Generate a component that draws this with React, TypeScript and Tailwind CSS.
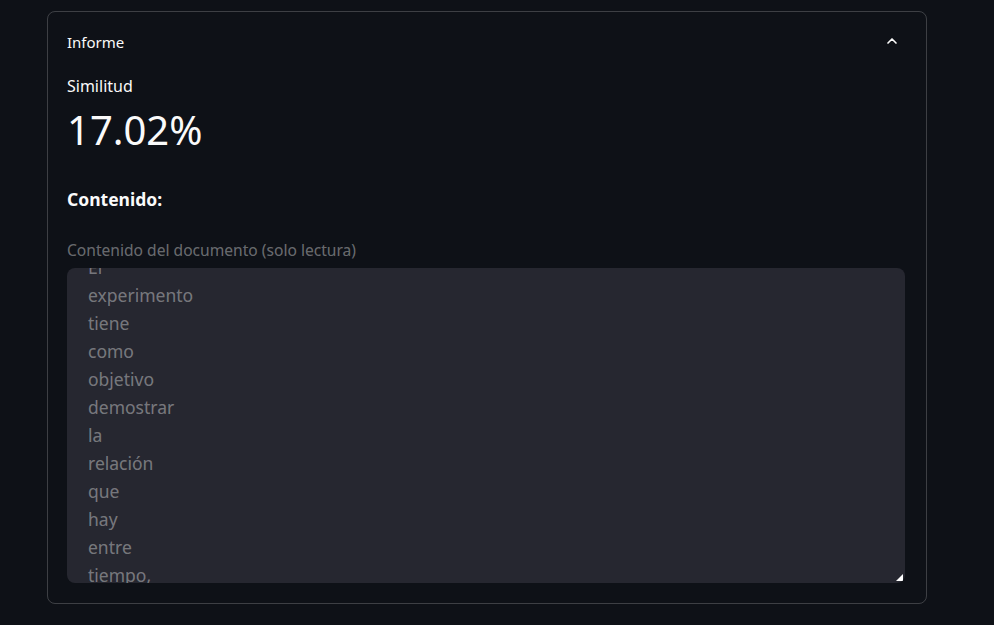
import { ChevronUp } from 'lucide-react'

const palabras = [
  'El',
  'experimento',
  'tiene',
  'como',
  'objetivo',
  'demostrar',
  'la',
  'relación',
  'que',
  'hay',
  'entre',
  'tiempo,',
]

export default function App() {
  return (
    <div className="min-h-[625px] w-full bg-[#0e1117] text-[#fafafa] font-['Noto_Sans',sans-serif] pt-[11px] px-[47px] pb-[20px]">
      <div className="w-[880px] rounded-lg border border-[rgba(250,250,250,0.2)] flex flex-col pb-[20px]">
        {/* Header */}
        <div className="flex items-center justify-between h-[60px] pl-[19px] pr-[26px]">
          <span className="text-[15px]">Informe</span>
          <ChevronUp size={16} strokeWidth={2.5} className="-mt-[2px]" />
        </div>

        <div className="px-[19px] flex flex-col">
          {/* Metric */}
          <div className="text-[16px] mt-[4px] leading-[20px]">Similitud</div>
          <div className="text-[40px] leading-[52px] mt-[8px]">17.02%</div>

          <div className="text-[17.5px] font-bold mt-[31px] leading-[24px]">Contenido:</div>

          <div className="text-[15.6px] text-[rgba(250,250,250,0.4)] mt-[29px] leading-[20px]">
            Contenido del documento (solo lectura)
          </div>

          {/* Textarea (read only), scrolled a little */}
          <div className="relative mt-[8px] h-[315px] w-[838px] rounded-lg bg-[#262730] overflow-hidden">
            <div className="-mt-[15px] pl-[21px] text-[17.5px] leading-[28px] text-[rgba(250,250,250,0.4)]">
              {palabras.map((p, i) => (
                <div key={i}>{p}</div>
              ))}
            </div>
            <svg
              className="absolute right-[2px] bottom-[2px]"
              width="7"
              height="7"
              viewBox="0 0 7 7"
            >
              <polygon points="7,0 7,7 0,7" fill="#ffffff" />
            </svg>
          </div>
        </div>
      </div>
    </div>
  )
}
